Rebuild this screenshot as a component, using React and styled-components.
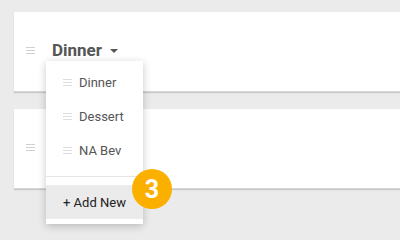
import React from "react";
import styled, { createGlobalStyle } from "styled-components";

const Global = createGlobalStyle`
  html, body { margin: 0; padding: 0; background: #ebebeb; }
  body { font-family: Roboto, "Liberation Sans", sans-serif; }
  * { box-sizing: border-box; }
`;

const Page = styled.div`
  position: relative;
  width: 400px;
  height: 240px;
  padding: 12px 0 0 14px;
  display: flex;
  flex-direction: column;
  gap: 17px;
  overflow: hidden;
`;

const Card = styled.div`
  position: relative;
  height: 80px;
  background: #fff;
  box-shadow: 0 1px 1px rgba(0, 0, 0, 0.14);
  border-bottom: 1px solid #d6d6d6;
  padding: 26px 0 0 12px;
`;

const HeaderRow = styled.div`
  display: flex;
  align-items: center;
  height: 24px;
  gap: 17px;
`;

const Handle = styled.span`
  display: inline-flex;
  flex-direction: column;
  justify-content: space-between;
  width: ${(p) => p.$w || 9}px;
  height: 7px;
  flex: none;
  & > i {
    display: block;
    height: 1px;
    background: ${(p) => p.$c || "#d4d4d4"};
  }
`;

const Title = styled.div`
  display: flex;
  align-items: center;
  gap: 8px;
  font-size: 17px;
  font-weight: 700;
  color: #555;
`;

const Caret = styled.span`
  width: 0;
  height: 0;
  border-left: 4px solid transparent;
  border-right: 4px solid transparent;
  border-top: 4px solid #555;
  margin-top: 2px;
`;

const Menu = styled.div`
  position: absolute;
  left: 32px;
  top: 49px;
  width: 97px;
  background: #fff;
  box-shadow: 0 2px 8px rgba(0, 0, 0, 0.22);
  padding: 4px 0 5px;
  z-index: 5;
`;

const Item = styled.div`
  display: flex;
  align-items: center;
  height: 34px;
  padding-left: 17px;
  gap: 7px;
  font-size: 13px;
  color: #555;
`;

const Divider = styled.div`
  height: 1px;
  background: #e6e6e6;
  margin: 9px 0 8px;
`;

const AddNew = styled.div`
  height: 34px;
  display: flex;
  align-items: center;
  padding-left: 17px;
  background: #ebebeb;
  font-size: 13px;
  color: #222;
`;

const Badge = styled.div`
  position: absolute;
  left: 132px;
  top: 169px;
  width: 40px;
  height: 40px;
  border-radius: 50%;
  background: #fbb000;
  color: #fff;
  font-weight: 700;
  font-size: 25px;
  display: flex;
  align-items: center;
  justify-content: center;
  z-index: 6;
`;

const Lines = ({ c, w }) => (
  <Handle $c={c} $w={w}>
    <i />
    <i />
    <i />
  </Handle>
);

export default function App() {
  return (
    <>
      <Global />
      <Page>
        <Card>
          <HeaderRow>
            <Lines c="#d0d0d0" />
            <Title>
              Dinner <Caret />
            </Title>
          </HeaderRow>
          <Menu>
            {["Dinner", "Dessert", "NA Bev"].map((t) => (
              <Item key={t}>
                <Lines c="#dedede" />
                {t}
              </Item>
            ))}
            <Divider />
            <AddNew>+ Add New</AddNew>
          </Menu>
        </Card>
        <Card>
          <HeaderRow>
            <Lines c="#d0d0d0" />
          </HeaderRow>
        </Card>
        <Badge>3</Badge>
      </Page>
    </>
  );
}
